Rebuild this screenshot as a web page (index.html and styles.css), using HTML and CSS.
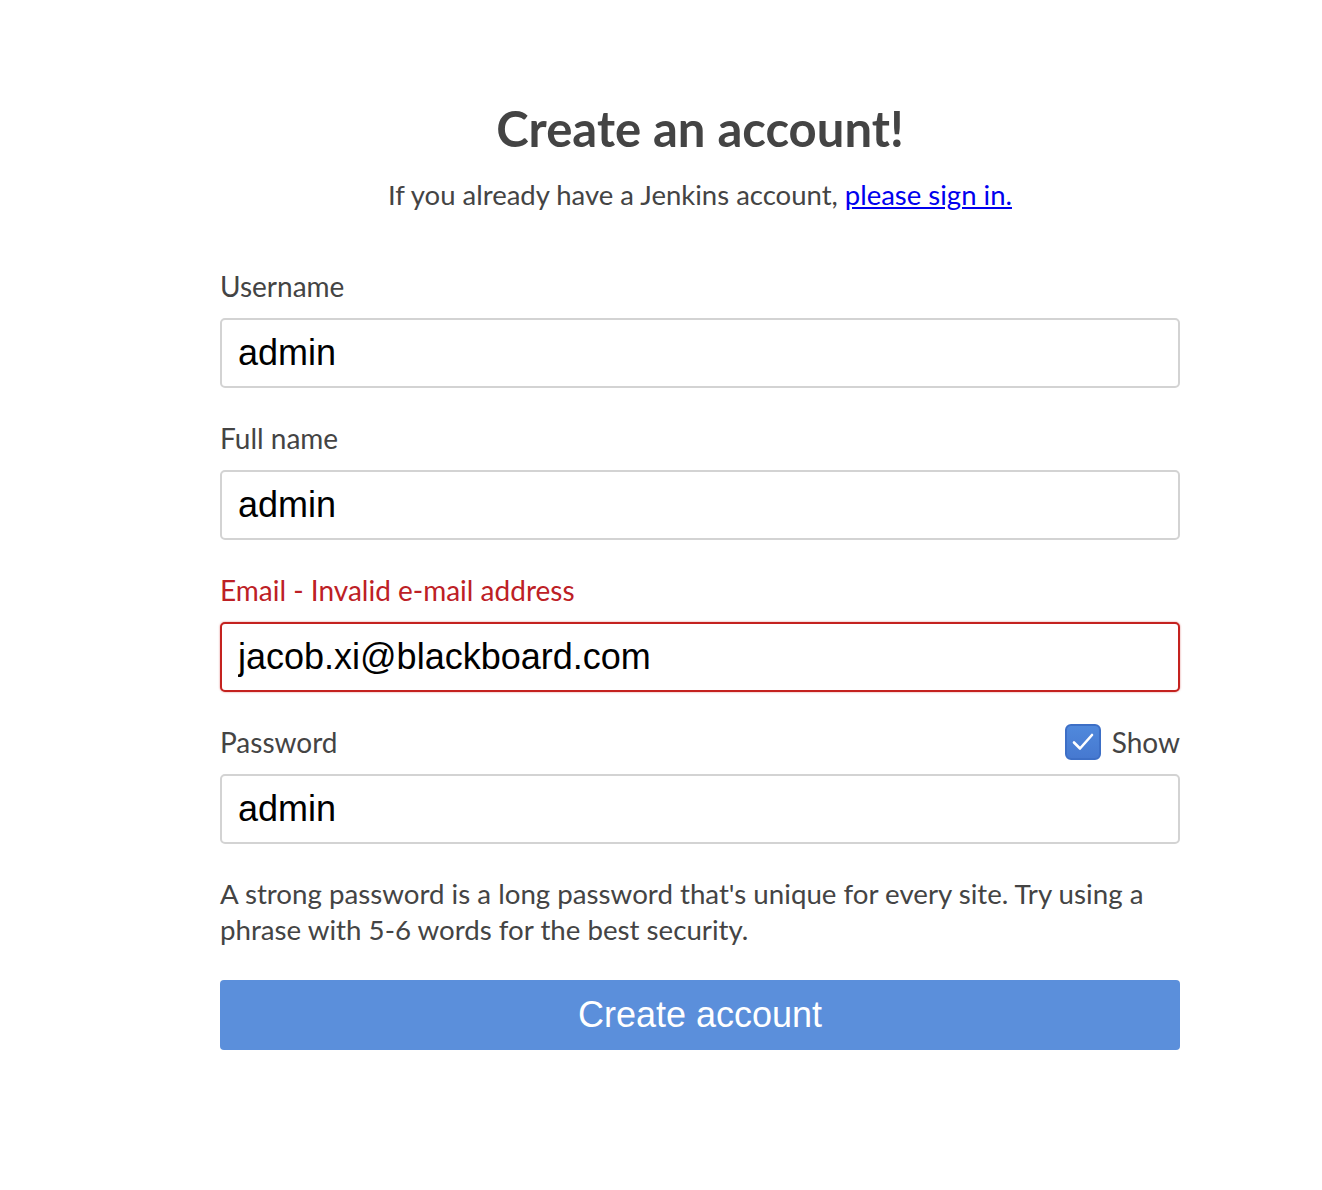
FILE: index.html
```html
<!DOCTYPE html>
<html>
<head>
<meta charset="utf-8">
<link rel="stylesheet" href="styles.css">
</head>
<body>
<div class="signup">
  <h1 class="title">Create an account!</h1>
  <p class="subtitle">If you already have a Jenkins account, <a href="#" class="link">please sign in.</a></p>
  <form class="form">
    <div class="field">
      <div class="label-row"><label class="label">Username</label></div>
      <input class="input" type="text" value="admin">
    </div>
    <div class="field">
      <div class="label-row"><label class="label">Full name</label></div>
      <input class="input" type="text" value="admin">
    </div>
    <div class="field">
      <div class="label-row"><label class="label label-error">Email - Invalid e-mail address</label></div>
      <input class="input input-error" type="text" value="jacob.xi@blackboard.com">
    </div>
    <div class="field">
      <div class="label-row">
        <label class="label">Password</label>
        <span class="show">
          <span class="checkbox"><svg width="30" height="30" viewBox="0 0 30 30"><path d="M6 15.5 L12 21.5 L24 8" fill="none" stroke="#fff" stroke-width="2.6" stroke-linecap="round" stroke-linejoin="round"/></svg></span>
          <span class="show-text">Show</span>
        </span>
      </div>
      <input class="input" type="text" value="admin">
    </div>
    <p class="help">A strong password is a long password that's unique for every site. Try using a phrase with 5-6 words for the best security.</p>
    <button type="button" class="button">Create account</button>
  </form>
</div>
</body>
</html>
```

FILE: styles.css
```css
html, body {
  margin: 0;
  padding: 0;
  background: #fff;
}
body {
  font-family: Lato, "Open Sans", sans-serif;
  color: #444;
}
.signup {
  width: 960px;
  margin-left: 220px;
  padding-top: 96px;
}
.title {
  margin: 0;
  text-align: center;
  font-size: 49px;
  font-weight: 700;
  line-height: 64px;
  color: #444;
}
.subtitle {
  margin: 17px 0 0;
  text-align: center;
  font-size: 27.5px;
  line-height: 36px;
  color: #444;
}
.link {
  color: #0000ee;
  text-decoration: underline;
}
.form {
  margin-top: 55px;
}
.field {
  margin-bottom: 32px;
}
.label-row {
  display: flex;
  justify-content: space-between;
  align-items: center;
  height: 36px;
  margin-bottom: 14px;
}
.label {
  font-size: 28px;
  line-height: 36px;
  color: #444;
}
.label-error {
  color: #bd2025;
}
.input {
  display: block;
  box-sizing: border-box;
  width: 100%;
  height: 70px;
  margin: 0;
  padding: 0 16px;
  border: 2px solid #d3d3d3;
  border-radius: 5px;
  font-family: "Liberation Sans", Arial, sans-serif;
  font-size: 36px;
  color: #000;
  background: #fff;
  outline: none;
}
.input-error {
  border-color: #c4221f;
  box-shadow: 0 0 2px rgba(196, 34, 31, 0.6);
}
.show {
  display: flex;
  align-items: center;
  gap: 11px;
}
.checkbox {
  box-sizing: border-box;
  width: 36px;
  height: 36px;
  border-radius: 6px;
  background: linear-gradient(#5089dc, #4679d0);
  border: 2px solid #3d6fc6;
  display: flex;
  align-items: center;
  justify-content: center;
}
.show-text {
  font-size: 28px;
  line-height: 36px;
  color: #444;
}
.help {
  margin: 0 0 32px;
  font-size: 27.7px;
  line-height: 36px;
  color: #444;
}
.button {
  display: block;
  width: 100%;
  height: 70px;
  border: none;
  border-radius: 4px;
  background: #5b8fdb;
  color: #fff;
  font-family: "Liberation Sans", Arial, sans-serif;
  font-size: 36px;
  cursor: pointer;
}
```
